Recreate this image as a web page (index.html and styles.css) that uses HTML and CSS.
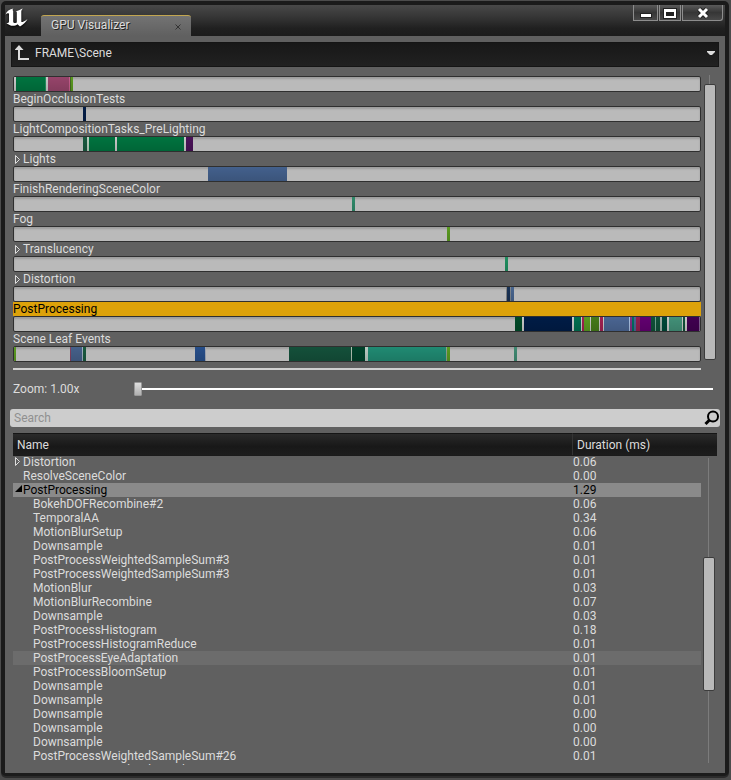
FILE: index.html
```
<!DOCTYPE html>
<html lang="en">
<head>
<meta charset="utf-8">
<title>GPU Visualizer</title>
<link rel="stylesheet" href="styles.css">
</head>
<body>
<div class="window">
  <header class="titlebar">
    <svg class="logo" viewBox="0 0 24 20" aria-hidden="true"><path d="M0.500 6.500C1.500 3.500 4.500 1 8.500 0.500C7.500 1.300 7.300 2 8.200 3V13.500C8.200 15 9.500 15.500 11.800 14.500V4.500C11.800 3.700 11.200 3.500 10.500 3.600C13 2.800 15 1.700 17.500 0.500V1C16.500 2 16.300 2.800 16.300 4V13.500C16.300 14.600 18.500 14.200 22.500 11C21 14.500 18 16.500 15 18.500L12.500 16.200C10.500 17.800 7.500 18.500 4.500 17C2.500 16 2 15.500 1.500 15C3.500 15.200 4 14.500 4 13V6.300C4 4.700 2.300 5 0.500 6.500Z"/></svg>
    <div class="tab"><span>GPU Visualizer</span>
      <button class="tab-close" aria-label="Close tab"><svg viewBox="0 0 6 6"><path d="M0.500 0.500L5.500 5.500M5.500 0.500L0.500 5.500"/></svg></button>
    </div>
    <div class="controls">
      <button class="ctl" aria-label="Minimize"><svg width="14" height="12" viewBox="0 0 14 12"><rect class="edge" x="1" y="6" width="12" height="5"/><rect class="ink" x="2" y="7" width="10" height="3"/></svg></button>
      <button class="ctl" aria-label="Maximize"><svg width="14" height="12" viewBox="0 0 14 12"><rect class="edge" x="0" y="1" width="14" height="11"/><path class="ink" fill-rule="evenodd" d="M1 2H13V11H1ZM3 5V9H11V5Z"/></svg></button>
      <button class="ctl close" aria-label="Close"><svg width="14" height="12" viewBox="0 0 14 12"><path class="x-edge" d="M3 2L11 10M11 2L3 10"/><path class="x-ink" d="M3 2L11 10M11 2L3 10"/></svg></button>
    </div>
  </header>
  <main class="content">
    <nav class="crumbs">
      <button class="up" aria-label="Up"><svg width="15" height="16" viewBox="0 0 15 16"><path d="M4 3V14H14" fill="none" stroke="#ddd" stroke-width="2"/><path d="M4 0L8.500 5H-0.500Z" fill="#ddd"/></svg></button>
      <span>FRAME\Scene</span>
      <button class="drop" aria-label="Choose path"><svg width="8" height="4" viewBox="0 0 8 4"><path d="M0 0H8V1L5 4H3L0 1Z" fill="#ddd"/></svg></button>
    </nav>
    <section class="events">
      <div class="lanes" id="lanes"></div>
      <div class="scroll scroll-events"><i></i></div>
    </section>
    <div class="zoom"><label for="zoom">Zoom: 1.00x</label><input id="zoom" type="range" min="0" max="100" value="0"></div>
    <div class="search"><input type="text" placeholder="Search" aria-label="Search"><svg width="16" height="16" viewBox="0 0 16 16"><circle cx="9" cy="6.500" r="5"/><path d="M5.500 10L1.500 14"/></svg></div>
    <section class="details">
      <table>
        <thead><tr><th>Name</th><th class="dur">Duration (ms)</th><th class="pad"></th></tr></thead>
        <tbody id="rows"></tbody>
      </table>
      <div class="scroll scroll-rows"><i></i></div>
    </section>
  </main>
</div>
<script src="main.js"></script>
</body>
</html>
```
FILE: styles.css
```
* { box-sizing: border-box; }
body { margin: 0; background: #4c4c4c; color: #dcdcdc; font: 12px/14px Roboto, sans-serif; }
button { padding: 0; border: 0; background: none; color: inherit; font: inherit; }
svg { display: block; }

.window { display: flex; flex-direction: column; height: calc(100vh - 5px); margin: 1px 2px 4px 1px; padding: 4px 4px 3px 4px; overflow: hidden; background: #1b1b1b; border-radius: 5px; box-shadow: 0 2px 0 #2b2b2b; }
.titlebar { display: flex; height: 31px; flex: none; background: linear-gradient(#494949, #323232 45%, #202020 75%, #1c1c1c); }
.logo { width: 24px; height: 20px; margin: 3px 12px 0 0; fill: #fff; filter: drop-shadow(0 1px 1px #000); }
.tab { display: flex; justify-content: space-between; align-items: center; width: 150px; margin-top: 10px; padding: 0 10px 2px; border-top: 1px solid #c2a650; border-radius: 3px 3px 0 0; background: linear-gradient(#737373, #606060); text-shadow: 1px 1px 0 #222; }
.tab-close { padding-top: 3px; }
.tab-close svg { width: 6px; height: 6px; stroke: #333; overflow: visible; }
.controls { display: flex; gap: 1px; height: 16px; margin: 0 2px 0 auto; }
.ctl { display: flex; align-items: center; justify-content: center; width: 25px; border: 1px solid #8d8d8d; border-top: 0; background: linear-gradient(#5b5b5b, #363636 50%, #484848); }
.ctl:nth-child(2) { width: 22px; }
.ctl.close { width: 41px; border-radius: 0 0 3px 0; }
.edge { fill: #222; }
.ink { fill: #fff; }
.x-edge { stroke: #222; stroke-width: 5; }
.x-ink { stroke: #fff; stroke-width: 3; }

.content { display: flex; flex-direction: column; flex: 1; min-height: 0; padding: 6px 5px 8px 5px; background: #606060; }
.crumbs { display: flex; align-items: center; height: 25px; margin: 0 1px; padding: 0 3px 3px; border: 1px solid #151515; background: linear-gradient(#181818, #212121); }
.up { width: 20px; }
.drop { margin-left: auto; }

.events { display: grid; grid-template-columns: 1fr 12px; gap: 3px; margin: 9px 4px 0 3px; }
.lanes { border-bottom: 2px solid #d0d0d0; padding-bottom: 6px; }
.lane-name { display: flex; align-items: center; height: 14px; white-space: pre; }
.lane-name.selected { background: #dda20a; color: #000; }
.lane-name svg { margin: 0 3px 0 2px; }
.track { position: relative; height: 16px; overflow: hidden; border: 1px solid #2f2f2f; border-radius: 2px; background: #bababa; box-shadow: inset 0 2px 2px #9c9c9c; }
.track span { position: absolute; top: 0; bottom: 0; background-image: linear-gradient(transparent, rgba(0,0,0,.12)); }

.scroll { position: relative; background: linear-gradient(#7c7c7c, #7c7c7c) 5px 0 / 1px 100% no-repeat; }
.scroll i { position: absolute; left: 0; right: 0; border: 1px solid #3c3c3c; border-radius: 2px; background: #b9b9b9; }
.scroll-events { margin: -1px 0 10px; }
.scroll-events i { top: 3%; bottom: 0; }

.zoom { display: flex; align-items: center; height: 39px; padding: 0 7px 2px 3px; }
.zoom label { width: 121px; }
.zoom input { flex: 1; min-width: 0; height: 14px; margin: 0; appearance: none; background: linear-gradient(#fff, #fff) 4px 6px / 100% 2px no-repeat; }
.zoom input::-webkit-slider-thumb { appearance: none; width: 8px; height: 14px; border: 1px solid #999; border-radius: 1px; background: linear-gradient(#dedede, #b0b0b0); }
.search { display: flex; align-items: center; height: 18px; flex: none; border-radius: 3px; background: #cdcdcd; }
.search input { flex: 1; min-width: 0; height: 18px; padding: 0 4px; border: 0; background: none; font: inherit; outline: 0; }
.search input::placeholder { color: #909090; opacity: 1; }
.search svg { fill: none; stroke: #000; stroke-width: 2; }
.search path { stroke-width: 3; }

.details { position: relative; flex: 1; min-height: 0; margin: 6px 3px 0; overflow: hidden; }
table { width: 100%; table-layout: fixed; border-collapse: separate; border-spacing: 0; }
th { height: 22px; padding: 0 4px; background: linear-gradient(#2a2a2a, #181818 60%, #1d1d1d); box-shadow: 0 1px 0 #1b1b1b; border-top: 1px solid #151515; font-weight: 400; text-align: left; position: relative; z-index: 1; }
th.dur { width: 129px; border-left: 1px solid #343434; }
th.pad { width: 16px; }
td { height: 14px; padding: 0; white-space: nowrap; }
td.name { position: relative; padding-left: 10px; }
td.name.child { padding-left: 20px; }
td.name svg { position: absolute; left: 2px; top: 2px; }
td.ms { padding-left: 1px; }
tr.selected td { background: #8a8a8a; color: #000; }
tr.hover td { background: #6c6c6c; }
tr td:last-child { background: none; }
.scroll-rows { position: absolute; top: 25px; right: 2px; bottom: 2px; width: 12px; }
.scroll-rows i { top: 32.500%; height: 44%; }
```
FILE: main.js
```
const RANGE = 686;
// Each event: [start, length, colour]
const lanes = [
  [null, [[0,2,'#c8c8c8'],[2,29,'#00733f'],[31,1,'#239060'],[32,2,'#c8c8c8'],[34,21,'#96446a'],[55,1,'#c75d8c'],[56,1,'#446b20'],[57,2,'#5a9a20']]],
  ['BeginOcclusionTests', [[69,3,'#041e48']]],
  ['LightCompositionTasks_PreLighting', [[69,4,'#1a5a40'],[73,2,'#b8d0c0'],[75,26,'#00733f'],[101,2,'#c8c8c8'],[103,67,'#00733f'],[170,2,'#c8c8c8'],[172,7,'#4a1258']]],
  ['Lights', [[194,79,'#43608c']], true],
  ['FinishRenderingSceneColor', [[338,3,'#2f8a6a']]],
  ['Fog', [[433,3,'#5a9a20']]],
  ['Translucency', [[491,3,'#1f8f60']], true],
  ['Distortion', [[492,1,'#888888'],[493,3,'#1a3356'],[496,1,'#808890'],[497,3,'#48658f']], true],
  ['PostProcessing', [[501,7,'#004a28'],[508,2,'#c8c8c8'],[510,48,'#001c46'],[558,2,'#c8c8c8'],[560,7,'#006e50'],[567,1,'#c8c8c8'],[568,2,'#a02050'],[570,6,'#5a9a20'],[576,1,'#c8c8c8'],[577,8,'#457a1a'],[585,1,'#c8c8c8'],[586,3,'#a02050'],[589,1,'#c8c8c8'],[590,25,'#4a6592'],[615,1,'#a8c0e0'],[616,2,'#803080'],[618,2,'#006e60'],[620,2,'#4a6592'],[622,4,'#902050'],[626,11,'#620070'],[637,4,'#0e5038'],[641,1,'#70a090'],[642,4,'#0e5038'],[646,2,'#a0b0a8'],[648,5,'#004838'],[653,2,'#c8c8c8'],[655,13,'#429078'],[668,1,'#c8c8c8'],[669,2,'#0e5038'],[671,2,'#c8c8c8'],[673,12,'#400050'],[685,1,'#806090']], false, true],
  ['Scene Leaf Events', [[0,2,'#5a9a20'],[56,1,'#804060'],[57,11,'#45608a'],[68,1,'#a0b0c0'],[69,3,'#1a5a40'],[181,10,'#264e8a'],[191,1,'#a0a8b8'],[275,62,'#14503a'],[337,1,'#b0c0b0'],[338,13,'#00422a'],[351,3,'#b8c8c0'],[354,78,'#208a72'],[432,1,'#90a090'],[433,3,'#5a9a20'],[500,3,'#408a72']]]
];
const closed = '<svg width="5" height="9" viewBox="0 0 5 9"><path d="M0.500 0.500L4.500 4.500L0.500 8.500Z" fill="none" stroke="#ddd"/></svg>';
const open = '<svg width="7" height="7" viewBox="0 0 7 7"><path d="M7 0V7H0Z"/></svg>';

document.getElementById('lanes').innerHTML = lanes.map(([name, events, folded, selected]) =>
  (name ? `<div class="lane-name${selected ? ' selected' : ''}">${folded ? closed : ''}${name}</div>` : '') +
  `<div class="track">${events.map(([s, l, c]) =>
    `<span style="left:${s / RANGE * 100}%;width:${l / RANGE * 100}%;background-color:${c}"></span>`).join('')}</div>`
).join('');

const rows = [
  ['Distortion','0.06','folded'], ['ResolveSceneColor','0.00',''], ['PostProcessing','1.29','selected'],
  ['BokehDOFRecombine#2','0.06'], ['TemporalAA','0.34'], ['MotionBlurSetup','0.06'], ['Downsample','0.01'],
  ['PostProcessWeightedSampleSum#3','0.01'], ['PostProcessWeightedSampleSum#3','0.01'], ['MotionBlur','0.03'],
  ['MotionBlurRecombine','0.07'], ['Downsample','0.03'], ['PostProcessHistogram','0.18'],
  ['PostProcessHistogramReduce','0.01'], ['PostProcessEyeAdaptation','0.01',undefined,'hover'],
  ['PostProcessBloomSetup','0.01'], ['Downsample','0.01'], ['Downsample','0.01'], ['Downsample','0.00'],
  ['Downsample','0.00'], ['Downsample','0.00'], ['PostProcessWeightedSampleSum#26','0.01'],
  ['PostProcessWeightedSampleSum#25','0.01']
];
document.getElementById('rows').innerHTML = rows.map(([name, ms, top, state]) =>
  `<tr class="${state || top || ''}"><td class="name${top === undefined ? ' child' : ''}">${top === 'folded' ? closed : top === 'selected' ? open : ''}${name}</td><td class="ms">${ms}</td><td></td></tr>`
).join('');
```
